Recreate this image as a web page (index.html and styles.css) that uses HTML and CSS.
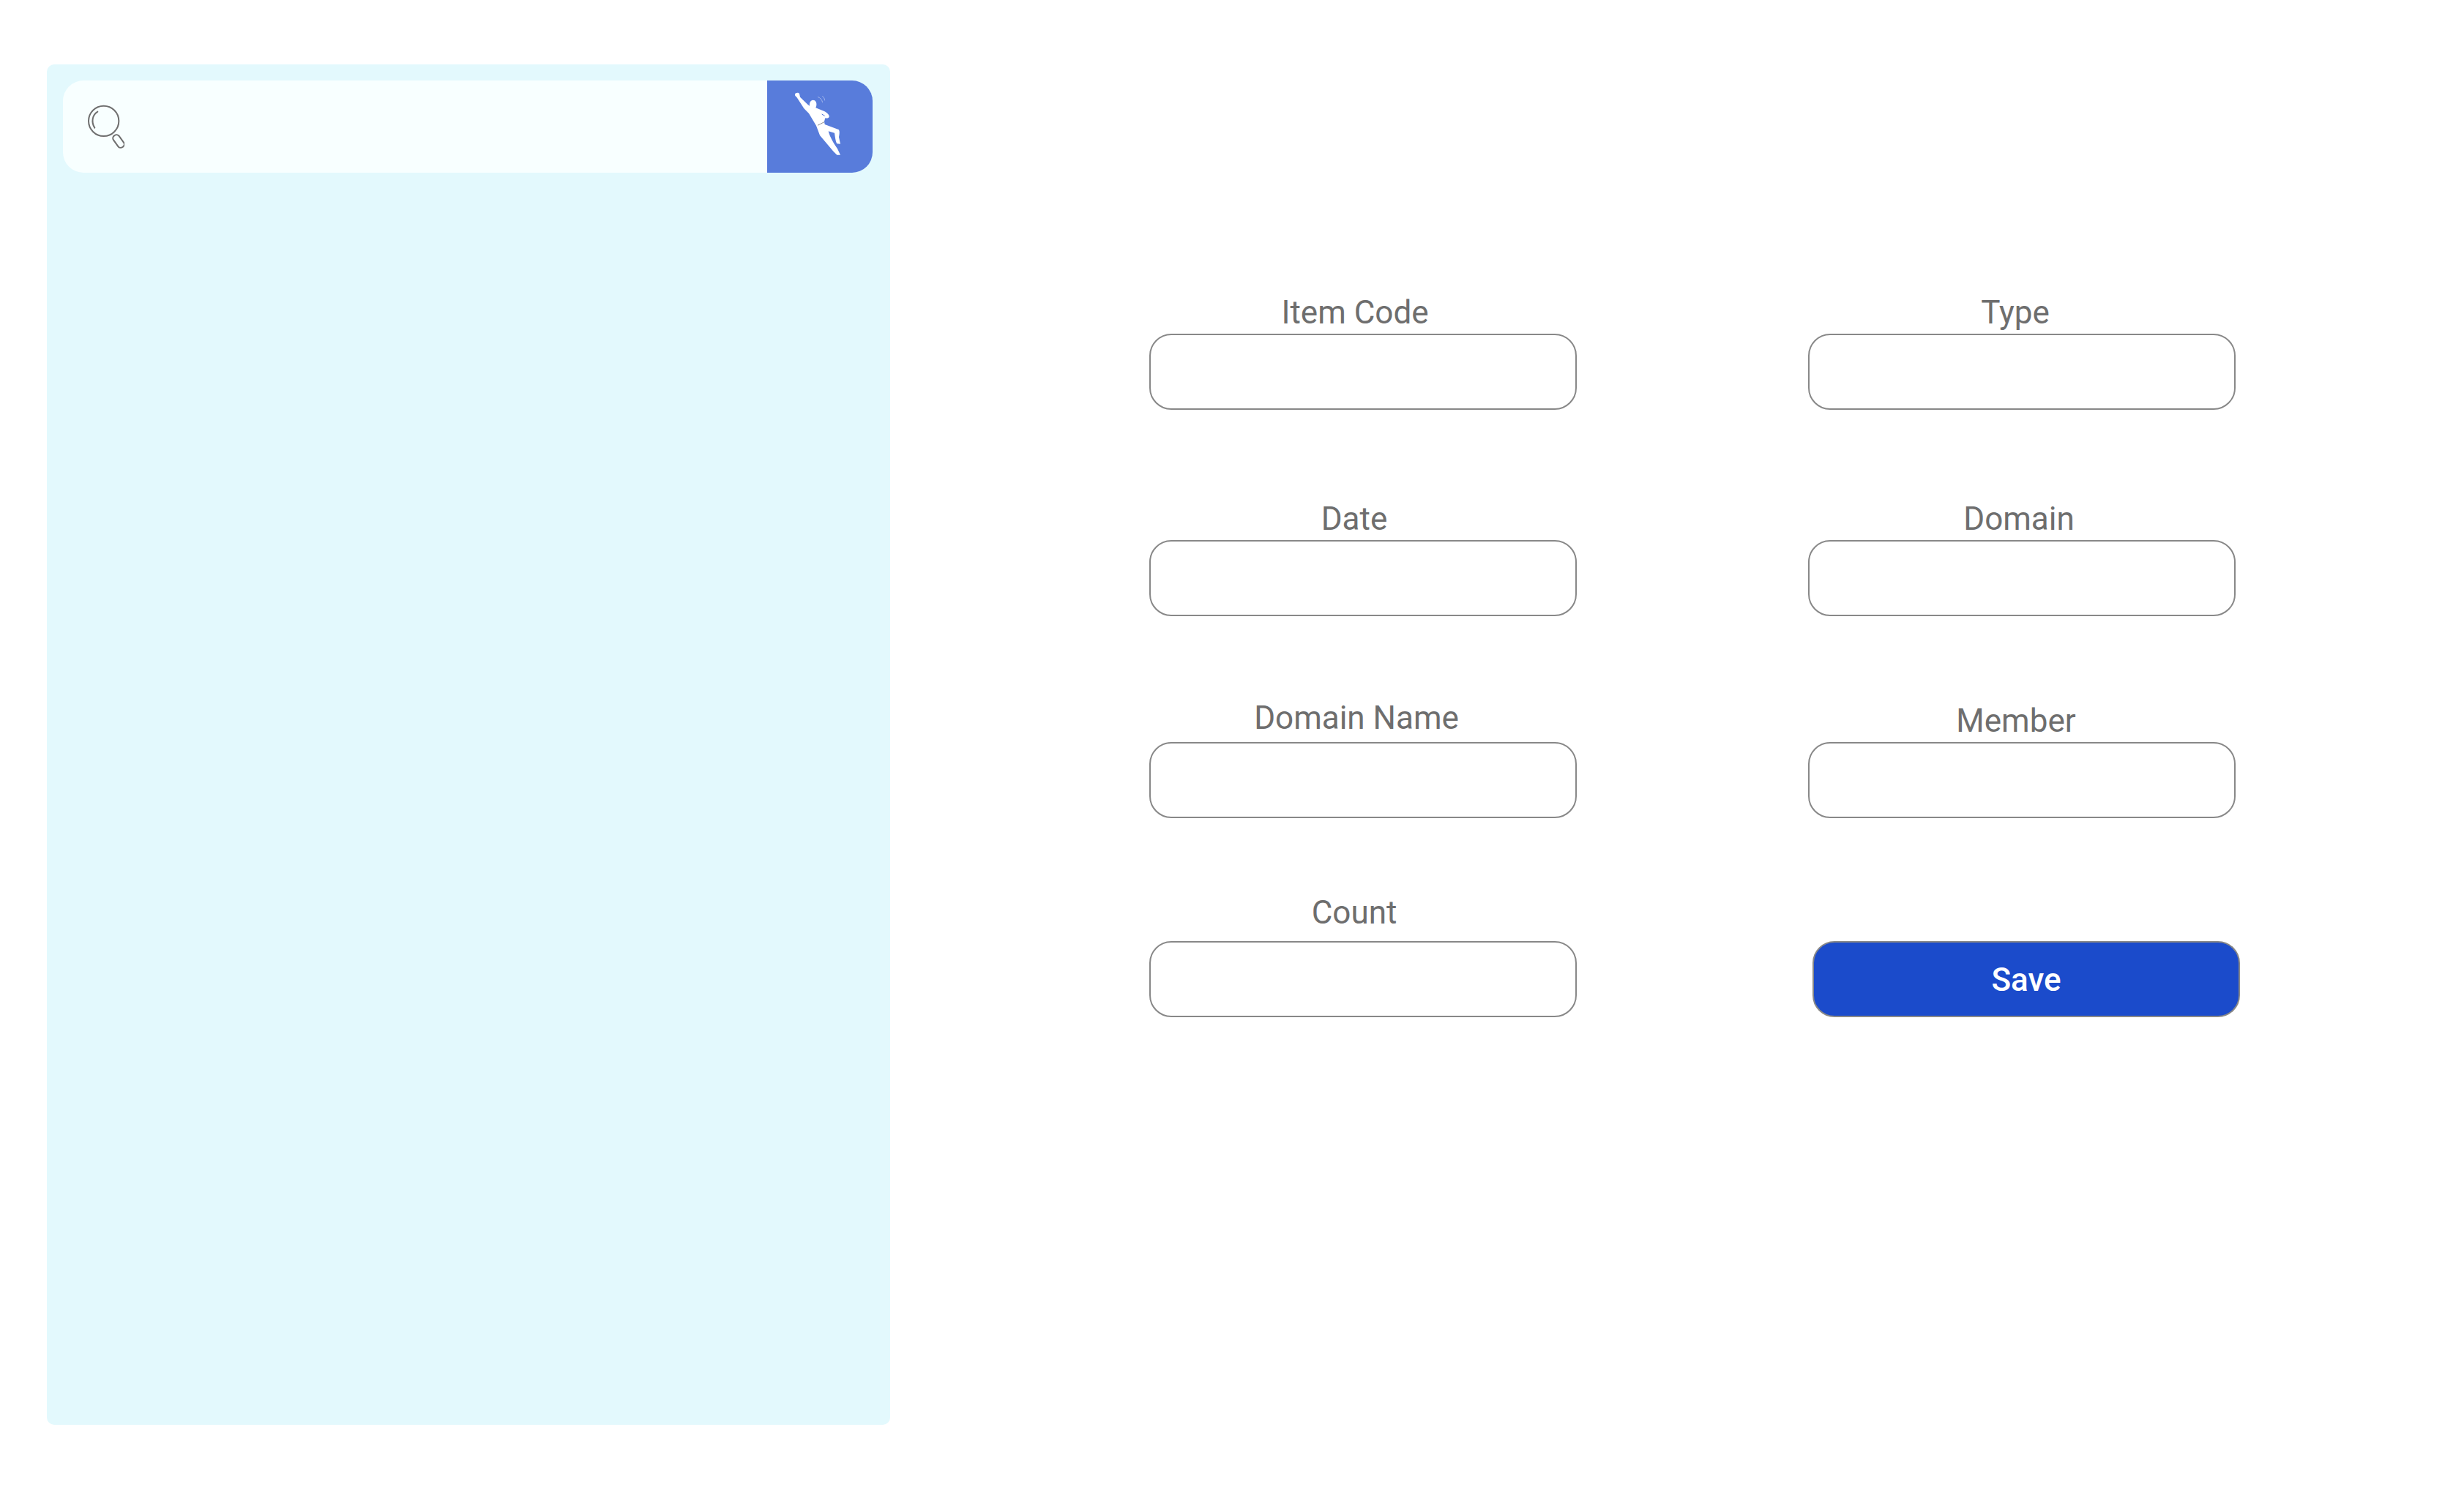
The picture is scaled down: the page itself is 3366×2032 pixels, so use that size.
FILE: index.html
```html
<!DOCTYPE html>
<html lang="en">
<head>
  <meta charset="UTF-8" />
  <meta name="viewport" content="width=device-width, initial-scale=1.0" />
  <title>Items</title>
  <link rel="stylesheet" href="styles.css">
</head>
<body>
  <aside class="sidebar">
    <div class="search">
      <div class="search-field">
        <svg class="search-icon" viewBox="240 220 150 180" fill="none" stroke="#6f6f6f" stroke-width="6" stroke-linecap="round">
          <circle cx="305" cy="287" r="62" />
          <path d="M280 249 C258 262 253 292 268 315" />
          <rect x="-14" y="-29" width="28" height="58" rx="13" transform="translate(366 370) rotate(-36)" />
        </svg>
      </div>
      <button type="button" class="search-btn">
        <svg class="flyer" viewBox="84 60 432 378">
          <path fill="#fff" d="M198 116 C200 110 212 108 216 114 L219 128 L250 158 L258 164 C256 150 262 141 272 140 C282 140 288 150 286 162 L283 172 L318 186 C330 192 340 202 338 209 C336 214 328 216 322 214 L318 228 L320 240 L378 262 C382 270 380 280 378 292 L384 320 L370 319 C364 310 362 288 360 275 L335 268 C340 290 358 320 372 340 L384 365 L370 365 L355 350 L300 285 L285 245 L255 195 L235 175 L205 128 C199 124 197 120 198 116 Z" />
          <path fill="none" stroke="#8f8f8f" stroke-width="3" d="M291 244 L318 230" />
          <path fill="none" stroke="#587cdb" stroke-width="3" d="M308 198 L320 205" />
          <path fill="none" stroke="#c9d4f2" stroke-width="2" d="M291 127 C302 131 309 140 311 150 M310 124 C316 128 319 134 320 142" />
        </svg>
      </button>
    </div>
  </aside>

  <form class="form">
    <div class="field">
      <label class="nudge-11">Item Code</label>
      <input type="text" />
    </div>
    <div class="field">
      <label class="nudge-9">Type</label>
      <input type="text" />
    </div>
    <div class="field">
      <label class="nudge-12">Date</label>
      <input type="text" />
    </div>
    <div class="field">
      <label class="nudge-4">Domain</label>
      <input type="text" />
    </div>
    <div class="field">
      <label class="nudge-9 gap-18">Domain Name</label>
      <input type="text" />
    </div>
    <div class="field">
      <label class="nudge-8">Member</label>
      <input type="text" />
    </div>
    <div class="field">
      <label class="nudge-12 gap-24">Count</label>
      <input type="text" />
    </div>
    <div class="field">
      <button type="button" class="save">Save</button>
    </div>
  </form>
</body>
</html>
```

FILE: styles.css
```css
* {
  box-sizing: border-box;
}
body {
  margin: 0;
  height: 2032px;
  background: #fff;
  font-family: Roboto, sans-serif;
  display: flex;
  align-items: flex-start;
  padding: 88px 0 0 64px;
}
.sidebar {
  width: 1152px;
  height: 1859px;
  background: #e3f9fd;
  border-radius: 10px;
  padding: 22px 24px 22px 22px;
}
.search {
  display: flex;
  height: 126px;
  border-radius: 28px;
  overflow: hidden;
}
.search-field {
  flex: 1;
  background: #f8ffff;
  display: flex;
  align-items: center;
  padding-left: 34px;
}
.search-icon {
  width: 50px;
  height: 60px;
}
.search-btn {
  width: 144px;
  border: 0;
  padding: 0;
  background: #587cdb;
  display: flex;
}
.flyer {
  width: 144px;
  height: 126px;
}
.form {
  margin-left: 354px;
  padding-top: 368px;
  display: grid;
  grid-template-columns: 584px 584px;
  column-gap: 316px;
  grid-template-rows: 282px 276px 272px 104px;
}
.field {
  display: flex;
  flex-direction: column;
  height: 104px;
}
.field label {
  height: 0;
  font-size: 44px;
  line-height: 60px;
  color: #6e6e6e;
  text-align: center;
  margin-top: -59px;
  margin-bottom: 59px;
}
.field input {
  height: 104px;
  width: 100%;
  border: 2px solid #888;
  border-radius: 30px;
  background: #fff;
}
.nudge-4 { padding-right: 8px; }
.nudge-8 { padding-right: 16px; }
.nudge-9 { padding-right: 18px; }
.nudge-11 { padding-right: 22px; }
.nudge-12 { padding-right: 24px; }
.field .gap-18 {
  margin-top: -63px;
  margin-bottom: 63px;
}
.field .gap-24 {
  margin-top: -69px;
  margin-bottom: 69px;
}
.save {
  width: 584px;
  height: 104px;
  margin-left: 6px;
  padding-top: 3px;
  border: 2px solid #888;
  border-radius: 30px;
  background: #1b4bcb;
  color: #fff;
  font-family: Roboto, sans-serif;
  font-size: 44px;
  font-weight: 500;
}
```
